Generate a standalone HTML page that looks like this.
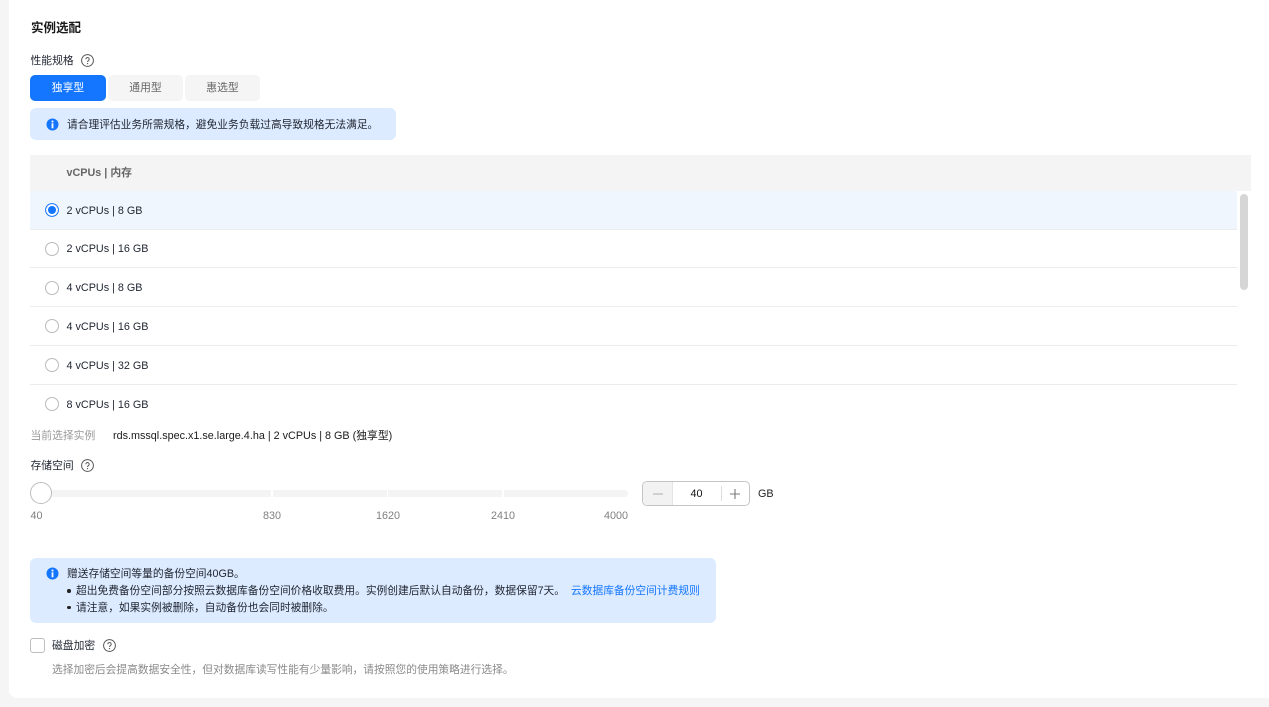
<!DOCTYPE html>
<html lang="zh">
<head>
<meta charset="utf-8">
<style>
html,body{margin:0;padding:0;width:1269px;height:707px;overflow:hidden;background:#f5f5f5}
body{position:relative;font-family:"Liberation Sans","Noto Sans CJK SC",sans-serif;font-size:10.8px;color:#1f2430}
.a{position:absolute;white-space:nowrap}
.t{position:absolute;white-space:nowrap;line-height:14px}
.c{font-size:10.74px}
.card{position:absolute;left:9px;top:-10px;width:1270px;height:708px;background:#fff;border-radius:8px}
.tab{position:absolute;top:75px;height:26px;line-height:26px;text-align:center;border-radius:5px;background:#f5f5f5;color:#666;font-size:10.8px}
.row{position:absolute;left:30px;width:1207px;height:38px;border-bottom:1px solid #ececec}
.radio{position:absolute;left:45px;width:12px;height:12px;border:1px solid #bbb;border-radius:50%;background:#fff}
.alert{position:absolute;left:30px;background:#dcebff;border-radius:6px}
.tick{position:absolute;top:490px;height:7px;background:#f4f4f4}
.lab{position:absolute;top:510px;color:#808080;line-height:13px;font-size:10.8px}
</style>
</head>
<body>
<div class="card"></div>

<div class="t" style="left:31px;top:21px;font-size:12.5px;font-weight:bold;color:#1a1a1a">实例选配</div>
<div class="t" style="left:30.5px;top:54px">性能规格</div>
<svg class="a" style="left:81px;top:53.5px" width="13" height="13" viewBox="0 0 13 13"><circle cx="6.5" cy="6.5" r="5.9" fill="none" stroke="#555" stroke-width="1"/><path d="M4.8 5.2a1.7 1.7 0 1 1 2.7 1.4c-.6.4-1 .7-1 1.4" fill="none" stroke="#555" stroke-width="1"/><circle cx="6.5" cy="9.6" r=".65" fill="#555"/></svg>

<div class="tab" style="left:30px;width:76px;background:#1476ff;color:#fff">独享型</div>
<div class="tab" style="left:108px;width:75px">通用型</div>
<div class="tab" style="left:185px;width:75px">惠选型</div>

<div class="alert" style="top:108px;width:366px;height:32px"></div>
<svg class="a" style="left:46px;top:118px" width="13" height="13" viewBox="0 0 13 13"><circle cx="6.5" cy="6.5" r="6" fill="#1476ff"/><rect x="5.6" y="2.6" width="1.8" height="1.8" fill="#fff"/><rect x="5.6" y="5.3" width="1.8" height="5" fill="#fff"/></svg>
<div class="t c" style="left:67px;top:118px">请合理评估业务所需规格，避免业务负载过高导致规格无法满足。</div>

<div class="a" style="left:30px;top:155px;width:1221px;height:36px;background:#f4f4f4"></div>
<div class="t" style="left:66.5px;top:166px;font-weight:bold;color:#666">vCPUs | 内存</div>

<div class="row" style="top:191px;background:#eff6fe"></div>
<div class="row" style="top:230px;height:37px"></div>
<div class="row" style="top:268px"></div>
<div class="row" style="top:307px"></div>
<div class="row" style="top:346px"></div>

<svg class="a" style="left:45px;top:203px" width="14" height="14" viewBox="0 0 14 14"><circle cx="7" cy="7" r="6.4" fill="#fff" stroke="#1476ff" stroke-width="1"/><circle cx="7" cy="7" r="4" fill="#1476ff"/></svg>
<div class="t" style="left:66.5px;top:204px">2 vCPUs | 8 GB</div>
<div class="radio" style="top:242px"></div>
<div class="t" style="left:66.5px;top:242px">2 vCPUs | 16 GB</div>
<div class="radio" style="top:281px"></div>
<div class="t" style="left:66.5px;top:281px">4 vCPUs | 8 GB</div>
<div class="radio" style="top:319px"></div>
<div class="t" style="left:66.5px;top:320px">4 vCPUs | 16 GB</div>
<div class="radio" style="top:358px"></div>
<div class="t" style="left:66.5px;top:359px">4 vCPUs | 32 GB</div>
<div class="radio" style="top:397px"></div>
<div class="t" style="left:66.5px;top:398px">8 vCPUs | 16 GB</div>

<div class="a" style="left:1240px;top:194px;width:8px;height:96px;background:#d6d6d6;border-radius:4px"></div>

<div class="t" style="left:30.5px;top:429px;color:#999">当前选择实例</div>
<div class="t" style="left:113px;top:429px;color:#1a1a1a">rds.mssql.spec.x1.se.large.4.ha | 2 vCPUs | 8 GB (独享型)</div>

<div class="t" style="left:30.5px;top:459px">存储空间</div>
<svg class="a" style="left:81px;top:459px" width="13" height="13" viewBox="0 0 13 13"><circle cx="6.5" cy="6.5" r="5.9" fill="none" stroke="#555" stroke-width="1"/><path d="M4.8 5.2a1.7 1.7 0 1 1 2.7 1.4c-.6.4-1 .7-1 1.4" fill="none" stroke="#555" stroke-width="1"/><circle cx="6.5" cy="9.6" r=".65" fill="#555"/></svg>

<div class="tick" style="left:30px;width:241px;border-radius:3px 0 0 3px"></div>
<div class="tick" style="left:273px;width:114px"></div>
<div class="tick" style="left:388px;width:114px"></div>
<div class="tick" style="left:504px;width:124px;border-radius:0 3px 3px 0"></div>
<div class="a" style="left:30px;top:482px;width:20px;height:20px;border:1px solid #bdbdbd;border-radius:50%;background:#fff"></div>

<div class="lab" style="left:30.5px">40</div>
<div class="lab" style="left:263px">830</div>
<div class="lab" style="left:376px">1620</div>
<div class="lab" style="left:491px">2410</div>
<div class="lab" style="left:604px">4000</div>

<div class="a" style="left:642px;top:481px;width:106px;height:23px;border:1px solid #c4c4c4;border-radius:5px;background:#fff;overflow:hidden">
  <div class="a" style="left:0;top:0;width:29px;height:23px;background:#f2f2f2;border-right:1px solid #e4e4e4"></div>
  <div class="a" style="left:78px;top:4px;width:1px;height:15px;background:#ddd"></div>
</div>
<svg class="a" style="left:652px;top:488px" width="12" height="12" viewBox="0 0 12 12"><path d="M1 6h10" stroke="#b5b5b5" stroke-width="1.1"/></svg>
<svg class="a" style="left:728.5px;top:488px" width="12" height="12" viewBox="0 0 12 12"><path d="M1 6h10M6 1v10" stroke="#7a7a7a" stroke-width="1.1"/></svg>
<div class="t" style="left:690.5px;top:487px;color:#111">40</div>
<div class="t" style="left:758px;top:487px;color:#222">GB</div>

<div class="alert" style="top:558px;width:686px;height:65px"></div>
<svg class="a" style="left:46px;top:567px" width="13" height="13" viewBox="0 0 13 13"><circle cx="6.5" cy="6.5" r="6" fill="#1476ff"/><rect x="5.6" y="2.6" width="1.8" height="1.8" fill="#fff"/><rect x="5.6" y="5.3" width="1.8" height="5" fill="#fff"/></svg>
<div class="t c" style="left:67px;top:567px">赠送存储空间等量的备份空间40GB。</div>
<div class="a" style="left:67.2px;top:589px;width:3.5px;height:3.5px;border-radius:50%;background:#222"></div>
<div class="t c" style="left:76px;top:584px">超出免费备份空间部分按照云数据库备份空间价格收取费用。实例创建后默认自动备份，数据保留7天。</div>
<div class="t c" style="left:571px;top:584px;color:#1476ff">云数据库备份空间计费规则</div>
<div class="a" style="left:67.2px;top:605.5px;width:3.5px;height:3.5px;border-radius:50%;background:#222"></div>
<div class="t c" style="left:76px;top:601px">请注意，如果实例被删除，自动备份也会同时被删除。</div>

<div class="a" style="left:30px;top:638px;width:13px;height:13px;border:1px solid #bdbdbd;border-radius:3px;background:#fff"></div>
<div class="t" style="left:52px;top:639px">磁盘加密</div>
<svg class="a" style="left:103px;top:638.5px" width="13" height="13" viewBox="0 0 13 13"><circle cx="6.5" cy="6.5" r="5.9" fill="none" stroke="#555" stroke-width="1"/><path d="M4.8 5.2a1.7 1.7 0 1 1 2.7 1.4c-.6.4-1 .7-1 1.4" fill="none" stroke="#555" stroke-width="1"/><circle cx="6.5" cy="9.6" r=".65" fill="#555"/></svg>
<div class="t c" style="left:52px;top:663px;color:#8a8a8a">选择加密后会提高数据安全性，但对数据库读写性能有少量影响，请按照您的使用策略进行选择。</div>
</body>
</html>
